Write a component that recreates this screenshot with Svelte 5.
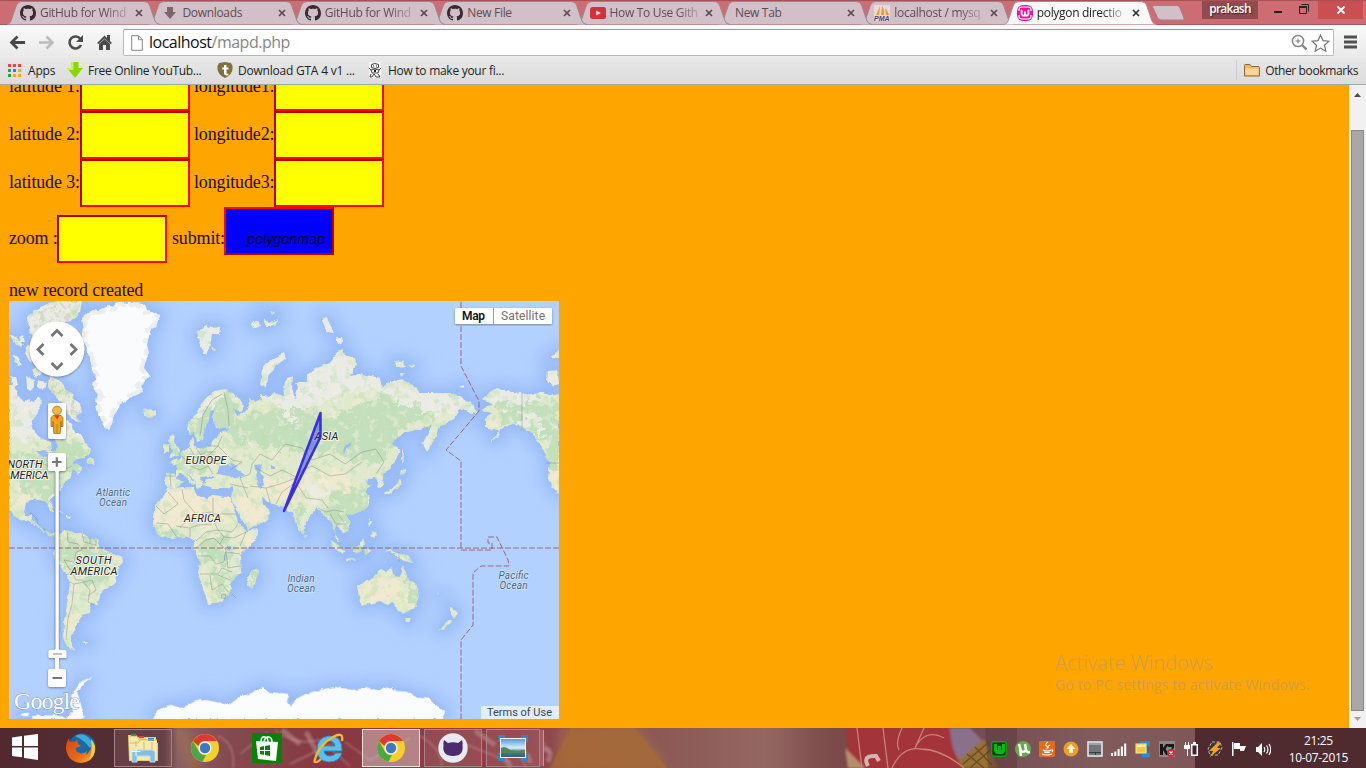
<script>
  const tabs = [
    { icon: 'github', title: 'GitHub for Wind', fade: true },
    { icon: 'download', title: 'Downloads' },
    { icon: 'github', title: 'GitHub for Wind', fade: true },
    { icon: 'github', title: 'New File' },
    { icon: 'youtube', title: 'How To Use Gith', fade: true },
    { icon: '', title: 'New Tab' },
    { icon: 'pma', title: 'localhost / mysq', fade: true },
    { icon: 'wamp', title: 'polygon directio', fade: true, active: true }
  ];

  const bookmarks = [
    { icon: 'apps', label: 'Apps', w: 60, ls: -0.2 },
    { icon: 'arrow', label: 'Free Online YouTub...', w: 150, ls: -0.3 },
    { icon: 'shield', label: 'Download GTA 4 v1 ...', w: 150, ls: -0.22 },
    { icon: 'robot', label: 'How to make your fi...', w: 150, ls: -0.28 }
  ];

  const appsDots = ['#f04438', '#f04438', '#f04438', '#2ba24c', '#3b78e7', '#f5a623', '#2ba24c', '#f5a623', '#f5a623'];

  const rows = [1, 2, 3];

  const greenland = 'M82 318L92 310L98 311L108 306L114 307L118 302L132 303L144 304L147 310L152 311L160 315L158 324L150 332L147 345L149 352L146 360L144 368L150 376L140 386L143 392L130 398L122 404L114 414L112 424L109 430L103 424L98 412L95 400L99 396L92 384L97 380L92 370L90 358L86 348L82 338L84 328Z';

  const land = [
    'M9 386L14 384L17 394L24 402L29 399L33 402L38 397L42 401L41 406L38 412L33 419L32 428L38 436L46 440L51 442L52 450L55 452L57 446L55 440L60 434L62 424L66 420L72 424L75 433L82 433L86 443L91 449L90 453L84 458L77 459L72 463L80 464L83 468L78 474L73 470L70 478L64 483L61 490L56 496L50 500L53 507L53 512L50 511L47 503L40 500L30 500L26 504L24 512L28 517L32 514L33 520L38 524L43 530L50 534L60 531L58 537L48 536L42 531L35 525L28 522L20 520L14 516L9 506Z',
    'M27 318L35 310L47 304L57 301L82 301L80 312L76 318L66 322L60 330L52 330L44 336L34 339L30 332Z',
    'M50 375L60 380L66 388L72 394L74 400L80 404L82 412L76 416L80 422L74 420L66 412L62 402L56 398L52 392L47 386Z',
    'M10 335L16 336L24 345L21 348L14 342Z', 'M19 337L23 335L25 341L21 341Z', 'M28 344L33 350L37 360L30 362L25 353Z', 'M12 354L17 356L22 365L17 366Z', 'M38 366L42 372L36 378L32 370Z', 'M10 376L16 378L18 384L14 386Z', 'M26 376L34 380L32 390L27 388Z', 'M38 380L46 382L44 390L37 387Z',
    'M54 403L60 405L62 413L57 412Z', 'M86 461L90 458L95 460L94 464L88 464Z',
    'M143 410L150 408L156 411L156 415L150 418L145 416Z',
    'M170 434L175 435L174 442L178 447L181 452L179 456L169 457L173 451L169 444Z', 'M164 445L169 444L169 452L164 454Z',
    'M197 332L203 329L206 325L212 328L220 327L219 334L212 334L210 345L206 355L202 350L199 342Z', 'M211 346L216 350L213 352Z',
    'M251 324L258 320L260 325L254 328Z', 'M263 318L270 322L278 319L275 326L266 327Z', 'M270 311L275 312L272 315Z',
    'M260 385L262 370L270 360L284 353L286 358L276 366L268 376L267 388Z',
    'M187 428L189 421L196 414L201 404L208 396L215 391L224 389L232 393L240 399L244 406L241 412L233 408L236 416L244 412L250 404L249 398L256 402L262 400L260 394L268 396L274 393L285 396L284 386L287 378L293 376L292 388L295 400L298 388L296 382L307 382L307 374L317 368L330 363L337 351L343 349L345 355L355 358L356 364L350 376L362 374L380 378L382 388L387 384L398 379L413 384L420 393L438 393L453 393L463 398L472 404L477 411L472 414L460 408L458 414L453 419L438 429L435 438L427 453L423 443L428 433L433 424L420 429L413 431L407 432L395 439L392 444L400 449L398 456L390 469L383 474L384 487L378 488L377 480L375 478L368 479L367 484L372 484L365 491L370 499L368 507L360 512L352 515L346 514L350 525L348 532L343 533L341 529L337 525L335 533L340 543L336 539L333 525L330 520L327 520L323 513L317 508L313 513L306 522L304 534L301 534L295 522L293 512L287 511L285 507L276 505L268 503L262 497L263 504L270 509L271 514L267 520L256 526L247 529L244 523L238 513L231 497L233 486L227 488L213 488L203 485L206 479L217 478L212 476L200 477L203 484L198 489L193 478L185 472L192 479L196 484L192 485L186 477L180 472L176 478L183 482L176 488L168 488L165 484L165 473L176 474L176 465L170 462L179 458L184 451L190 447L189 440L193 436L195 447L202 449L210 446L214 439L219 436L220 432L230 429L215 428L213 419L216 406L209 414L207 423L205 430L202 439L197 441L195 433L190 434Z',
    'M322 319L327 317L331 327L334 333L327 332L324 325Z', 'M336 337L342 337L343 342L338 344Z', 'M394 361L404 362L406 366L397 367Z', 'M408 365L414 366L412 368Z', 'M400 373L405 373L402 376Z', 'M458 387L464 385L464 388Z',
    'M167 489L182 487L194 487L197 494L207 499L214 495L224 497L230 496L233 504L238 522L246 531L258 529L258 535L252 545L240 555L241 572L231 583L232 590L222 602L208 604L203 588L198 573L200 562L193 548L195 541L188 537L170 538L160 537L153 527L153 518L155 505L163 497Z',
    'M257 568L258 574L255 584L250 588L247 583L250 573Z',
    'M60 533L67 530L72 533L82 533L90 538L97 540L100 548L112 553L123 557L124 562L117 570L115 583L103 590L97 605L91 604L90 613L82 615L77 625L74 632L71 638L71 645L76 651L67 647L63 638L64 622L67 605L70 582L65 573L55 558L53 553L58 547Z',
    'M357 585L370 580L380 570L386 572L392 567L393 574L398 577L401 575L403 566L407 575L410 580L417 586L419 596L415 608L405 613L398 611L392 602L388 605L380 601L362 606L359 598Z', 'M405 618L411 618L408 623Z',
    'M451 607L458 613L454 619L451 614Z', 'M449 619L452 621L444 630L440 629Z',
    'M385 550L390 550L396 553L408 555L413 563L404 561L398 559L394 554Z', 'M352 547L357 546L363 539L365 544L360 553L354 552Z', 'M329 540L336 543L344 551L343 555L337 550Z', 'M345 558L357 560L356 561L346 560Z', 'M365 549L370 549L367 556L366 553Z', 'M369 518L371 521L370 527L368 524Z', 'M373 531L377 534L374 538L371 535Z', 'M304 533L307 536L305 538Z',
    'M402 448L404 456L403 464L401 460Z', 'M401 470L406 469L405 473L400 475Z', 'M400 478L402 484L398 488L388 494L384 494L389 489L396 486Z', 'M54 507L60 511L65 514L58 511Z', 'M66 516L71 517L70 519L66 518Z', 'M437 592L439 594L438 594Z', 'M83 642L88 642L86 644Z',
    'M482 399L488 394L497 388L505 391L520 393L532 395L543 391L550 396L559 394L559 493L553 489L548 479L550 463L543 449L537 440L530 432L522 428L513 424L500 429L498 438L490 443L495 436L498 431L485 428L485 419L492 413L482 411L487 406L492 405Z',
    'M548 371L558 370L559 384L552 386L547 380Z', 'M551 357L559 350L559 358Z'
  ];

  const antarctica = [
    'M153 719L158 710L170 705L182 708L200 699L215 702L230 704L240 697L252 693L263 687L268 692L288 694L287 702L290 708L296 699L306 694L320 690L335 687L352 690L370 688L376 690L391 687L395 691L408 692L420 698L430 699L437 706L445 711L443 719Z',
    'M92 677L84 683L77 692L80 702L85 719L66 719L74 708L72 696L80 682Z', 'M20 714L30 713L29 717L22 717Z', 'M33 716L60 715L66 719L34 719Z'
  ];

  const forest = [
    'M9 453L40 455L60 440L90 448L85 462L60 485L46 500L30 498L9 480Z', 'M190 430L200 410L226 394L236 400L240 412L226 428L212 436L196 440Z',
    'M225 425L262 412L310 405L322 420L340 412L390 395L410 400L430 398L440 412L400 430L390 446L382 470L350 458L330 450L300 454L270 445L240 448Z',
    'M170 445L184 455L205 450L215 460L205 475L180 470Z', 'M345 490L366 488L368 506L350 530L336 532L320 512L328 500Z', 'M200 540L228 534L232 560L210 566L198 560Z',
    'M158 530L190 534L194 540L160 538Z', 'M60 535L82 536L96 542L116 558L108 580L92 585L70 572L56 558Z', 'M500 402L540 398L559 410L559 480L540 442L510 422L494 412Z',
    'M352 540L366 540L362 555L352 552Z', 'M390 552L412 556L410 563Z', 'M404 570L419 590L414 611L404 604L410 592Z', 'M295 508L303 512L303 533L298 524Z', 'M210 572L230 572L230 588L218 598Z', 'M28 520L60 532L55 536L38 529Z', 'M250 570L258 570L253 587Z'
  ];
  const desert = [
    'M165 490L230 495L238 516L232 526L156 526L156 505Z', 'M234 492L262 500L270 514L250 526L238 510Z', 'M250 484L285 478L340 472L352 488L320 496L290 502L260 496Z', 'M360 584L380 576L402 584L408 598L392 600L364 604Z',
    'M245 530L257 532L245 550L236 545Z', 'M68 584L74 590L72 620L76 628L68 638L65 620Z', 'M204 580L210 584L212 600L206 600Z', 'M16 480L26 486L26 508L16 505Z', 'M488 419L500 420L500 434L490 428Z', 'M110 552L122 558L118 566L112 562Z', 'M548 468L556 470L558 488L551 484Z'
  ];
  const tundra = [
    'M9 380L40 400L52 398L86 400L88 436L74 438L40 436L9 440Z', 'M262 392L300 380L340 350L360 372L420 388L478 402L470 416L440 414L400 402L390 394L360 388L330 400L290 412L270 402Z', 'M196 414L210 394L220 394L204 412Z',
    'M484 400L500 386L545 390L559 396L530 402L500 406Z', 'M424 430L436 430L428 452Z', 'M20 296L90 296L50 340L20 340Z', 'M515 412L545 420L546 440L530 426Z', 'M286 414L296 418L300 428L288 424Z', 'M300 490L326 486L336 492L318 498Z', 'M9 330L50 330L50 392L9 392Z', 'M190 318H290V360H190Z', 'M258 350H290V392H258Z', 'M320 315H345V345H320Z', 'M545 345H559V390H545Z'
  ];

  const borders = [
    'M9 462L40 462L48 466L58 474L64 470L72 466', 'M522 392V430M546 463H559', 'M200 436L203 415L212 400L222 394M224 392L228 410L229 426', 'M182 456L187 462L198 463L208 456L218 446L232 460L242 462L230 470M190 448L196 458L205 452L216 452M190 466L200 470L208 466L213 474M166 476L176 476M170 474L171 487M196 448L206 462L220 464M208 446L218 446L222 436',
    'M240 478L250 474L252 464L260 454L272 460L285 444L302 448L312 460L330 454L345 464L362 452L376 449L384 462L376 474M250 486L266 488L280 484L296 478L302 470L312 466L330 476L345 474L362 462M266 488L270 502M276 504L282 492L296 482L306 498L322 500L328 508M256 468L270 476L282 470L298 478M240 478L248 498M230 484L248 488',
    'M182 489L184 500L196 514L212 512M213 498V520M213 514H236M168 492L178 504L164 514L156 506M180 528L190 516M156 523L168 524L176 536M176 526L190 528L198 525L212 524M190 528L190 537M196 541L206 532L218 530L232 532L238 524M213 520L218 530L224 537L234 538L246 532L240 546M198 556L210 556L216 564L224 562L226 550L220 544L224 537M200 574H218L222 568L232 572M210 575L212 590L222 584L228 592M218 575L230 580M226 552L240 554M226 552L228 568L240 566M196 548L206 540L214 538L220 544M232 594L236 598',
    'M67 530L68 542L78 544L82 550L76 552L74 562L64 560M82 533L84 542L96 545M90 538V543M96 540V546M66 575L72 572L76 580L82 580L90 590L88 602L94 605M70 582L74 584L72 604L68 618L66 640M74 584L84 582L92 580L96 590L88 596M64 560L70 570L80 570',
    'M30 512L38 520M38 524L36 518M46 534L44 528M318 508L326 512L334 510L344 512M330 514L336 524L346 524M338 514L344 522M350 515M364 548L352 548M399 552V562', 'M222 594L226 595L225 599L221 598Z'
  ];

  const tray = ['wamp', 'utorrent', 'java', 'update', 'touchpad', 'signal', 'archive', 'k7', 'power', 'winamp', 'flag', 'volume'];
  const taskbar = [
    { icon: 'firefox' },
    { icon: 'explorer', state: 'open' },
    { icon: 'chrome' },
    { icon: 'store' },
    { icon: 'ie' },
    { icon: 'chrome', state: 'focus' },
    { icon: 'octocat', state: 'open' },
    { icon: 'photo', state: 'open stack' }
  ];
</script>

{#snippet githubMark()}
  <svg width="16" height="16" viewBox="0 0 16 16"><path fill="#382b30" d="M8 0C3.58 0 0 3.58 0 8c0 3.54 2.29 6.53 5.47 7.59.4.07.55-.17.55-.38 0-.19-.01-.82-.01-1.49-2.01.37-2.53-.49-2.69-.94-.09-.23-.48-.94-.82-1.13-.28-.15-.68-.52-.01-.53.63-.01 1.08.58 1.23.82.72 1.21 1.87.87 2.33.66.07-.52.28-.87.51-1.07-1.78-.2-3.64-.89-3.64-3.95 0-.87.31-1.59.82-2.15-.08-.2-.36-1.02.08-2.12 0 0 .67-.21 2.2.82.64-.18 1.32-.27 2-.27s1.36.09 2 .27c1.53-1.04 2.2-.82 2.2-.82.44 1.1.16 1.92.08 2.12.51.56.82 1.27.82 2.15 0 3.07-1.87 3.75-3.65 3.95.29.25.54.73.54 1.48 0 1.07-.01 1.93-.01 2.2 0 .21.15.46.55.38A8.01 8.01 0 0 0 16 8c0-4.42-3.58-8-8-8z" /></svg>
{/snippet}

{#snippet favicon(name)}
  {#if name === 'github'}
    {@render githubMark()}
  {:else if name === 'download'}
    <svg width="16" height="16" viewBox="0 0 16 16"><path fill="#7c666b" d="M5 2h6v5h3L8 14 2 7h3z" /></svg>
  {:else if name === 'youtube'}
    <svg width="16" height="16" viewBox="0 0 16 16"><rect y="2" width="16" height="12" rx="2.500" fill="#d2333a" /><path fill="#ecd7dc" d="M6.200 5.500v5L11 8z" /></svg>
  {:else if name === 'pma'}
    <svg width="16" height="16" viewBox="0 0 16 16"><rect width="16" height="16" fill="#e7d9dc" /><path fill="#f09a2c" d="M6 1L5 10H2Q4 6 6 1zM8 1q3 4 2 9H7zM11 3q3 3 4 7h-3z" /><text x="0" y="16" font-size="6.600" font-weight="700" font-style="italic" fill="#55436c" font-family="Liberation Sans, sans-serif" textLength="15.500" lengthAdjust="spacingAndGlyphs">PMA</text></svg>
  {:else if name === 'wamp'}
    <svg width="16" height="16" viewBox="0 0 16 16"><rect width="16" height="16" rx="6" fill="#fb0d9c" /><path fill="none" stroke="#fff" stroke-width="1.200" d="M2 6V5q0-3 3-3h6q3 0 3 3v1M2 10v1q0 3 3 3h6q3 0 3-3v-1" /><path fill="none" stroke="#fff" stroke-width="1.900" stroke-linecap="round" d="M4.600 5.500v3.200q.3 2 1.900 2T8 8.800V6.400v2.400q0 1.900 1.500 1.900t1.900-2V5.500" /></svg>
  {/if}
{/snippet}

{#snippet chromeLogo()}
  <svg width="30" height="30" viewBox="0 0 30 30">
    <circle cx="15" cy="15" r="14" fill="#f7cf2a" />
    <path fill="#dc3b30" d="M2.900 8A14 14 0 0 1 27.100 8H15a7 7 0 0 0-6.600 5z" />
    <path fill="#4aa844" d="M2.900 8 9 18.500A7 7 0 0 0 16 22l-3.500 6.800A14 14 0 0 1 2.900 8z" />
    <circle cx="15" cy="15" r="6.600" fill="#f2f2f2" /><circle cx="15" cy="15" r="5.200" fill="#3d79bd" />
  </svg>
{/snippet}

{#snippet appIcon(name)}
  {#if name === 'chrome'}
    {@render chromeLogo()}
  {:else if name === 'firefox'}
    <svg width="30" height="30" viewBox="0 0 30 30">
      <defs><linearGradient id="fox" x1="0" y1="0" x2="1" y2="1"><stop offset="0" stop-color="#d84515" /><stop offset=".6" stop-color="#e76b19" /><stop offset="1" stop-color="#f6c63a" /></linearGradient></defs>
      <circle cx="16" cy="14" r="13.500" fill="#1769a8" /><path d="M9 3q7-4 13 1 6 6 2 11-5-7-15-12z" fill="#3caade" />
      <path fill="url(#fox)" d="M3 5q0 3 1 4 3-1 5 0l2-3 1 5 3 2-5 2q-1 4 4 5 4 1 7-2l-1 4q7-5 5-15 5 6 4 11-2 11-14 12Q2 29 0 16 0 9 3 5z" />
      <path fill="#f9cf35" d="M25 6q5 6 4 11-1 7-6 10 4-8 2-21z" />
    </svg>
  {:else if name === 'explorer'}
    <svg width="32" height="30" viewBox="0 0 32 30">
      <path fill="#e4cb7e" d="M1 2h8l2 2h18v6h2v18H2z" /><path fill="#f7e8ac" d="M2 4h8l1 3h8v-2h9l2 3v19H3z" />
      <path fill="#24a343" d="M4 1h5v2H4z" /><path fill="#d34a38" d="M12 3h5v2h-5z" /><path fill="#358bc8" d="M21 5h6v3h-6z" />
      <path fill="none" stroke="#d9bd69" d="M3 10h8l2-3h17M9 8v12M17 9v10M25 9v10" />
      <path fill="#82bfe0" stroke="#b9e0f3" d="M5 29V20q0-3 3-3h17q3 0 3 3v9h-5v-6H10v6z" /><path stroke="#fff" stroke-width="1" d="M9 14v9M4.500 18.500h9" />
    </svg>
  {:else if name === 'store'}
    <svg width="30" height="30" viewBox="0 0 30 30">
      <rect width="30" height="30" fill="#078207" /><path fill="none" stroke="#fff" stroke-width="1.600" d="M9 9Q9 3 13 4q3 0 3 5M12 9q1-5 4-5 4 0 4 5" /><path fill="#fff" d="M4 8l22 1-2 19L6 26z" />
      <path fill="#078207" d="M8 14l4-1v4H8zm5-1l5-1v5h-5zM8 18h4v4l-4-1zm5 0h5v5l-5-1z" />
    </svg>
  {:else if name === 'ie'}
    <svg width="32" height="30" viewBox="0 0 32 30">
      <path fill="#59bfec" stroke="#258cc7" d="M29 18H11q1 5 6 5 4 0 6-3h6q-3 9-13 9Q4 28 4 17 4 4 16 3q13-1 13 15zM11 13h11q-1-5-5.500-5T11 13z" />
      <path fill="none" stroke="#f5b82e" stroke-width="2.300" d="M8 26q-8 7-6 0Q6 12 20 4q11-6 9 4" />
    </svg>
  {:else if name === 'octocat'}
    <svg width="30" height="30" viewBox="0 0 30 30"><circle cx="15" cy="15" r="14.700" fill="#e9e9f1" /><path fill="#4b2c70" d="M6 7l4 3q5-1.500 10 0l4-3q1 3 .5 5 1.500 11-9.500 11T5.500 12Q5 10 6 7z" /></svg>
  {:else if name === 'photo'}
    <svg width="30" height="26" viewBox="0 0 30 26">
      <defs><linearGradient id="sky" x1="0" y1="0" x2="0" y2="1"><stop offset="0" stop-color="#4f9ddd" /><stop offset=".5" stop-color="#daf0f7" /><stop offset=".7" stop-color="#3f7c86" /><stop offset="1" stop-color="#356084" /></linearGradient></defs>
      <path fill="none" stroke="#3c83bd" stroke-width="4" d="M7 2H2v5M23 2h5v5M2 18v6h5M28 18v6h-5" /><rect x="2" y="3" width="26" height="20" fill="#edf5f7" /><rect x="3" y="4" width="24" height="18" fill="url(#sky)" /><path fill="#53865b" d="M3 13q4-3 9 2l7 1 8-1v3H3z" />
    </svg>
  {/if}
{/snippet}

{#snippet trayIcon(name)}
  <svg width="16" height="16" viewBox="0 0 16 16">
    {#if name === 'wamp'}
      <rect x=".7" y=".7" width="14.600" height="14.600" rx="2" fill="#063e09" stroke="#09a20d" stroke-width="1.400" /><path fill="#0bb812" d="M3 3h3v6h1V5h3v4h1V3h3v7l-2 3H5l-2-3z" />
    {:else if name === 'utorrent'}
      <circle cx="8" cy="8" r="8" fill="#62ac48" /><path fill="none" stroke="#fff" stroke-width="2.500" d="M4 3l2 7q3 2 5-1L10 3m1 6q1 3 4 2M5 8l1 7" />
    {:else if name === 'java'}
      <rect width="16" height="16" rx="1" fill="#e46b1c" /><path fill="none" stroke="#fff" stroke-width="1.100" d="M9 1Q5 4 8 5.500T7 8M11 4Q7 6 9 7M4 9q4 2 8 0M5 11q3 1 6 0M3 13q5 2 10 0M12 9q3-1 1 2" />
    {:else if name === 'update'}
      <circle cx="8" cy="8" r="7.500" fill="#f59a23" /><path fill="#fff6d0" d="M8 3l4.500 5H10v4H6V8H3.500z" />
    {:else if name === 'touchpad'}
      <rect x="1" y="1" width="14" height="14" fill="#73777a" stroke="#e4eff6" stroke-width="1.500" /><path fill="#303b44" d="M2 11h12v1H2zM8 12h1v2H8z" /><path fill="#9da2a3" d="M2 2h12v2H2z" />
    {:else if name === 'signal'}
      <path fill="#fff" d="M0 12h2v3H0zM3.300 10.500h2V15h-2zM6.600 8h2v7h-2zM9.900 5.500h2V15h-2zM13.200 2.500h2V15h-2z" />
    {:else if name === 'archive'}
      <path fill="#2f8acc" d="M5 0h10v5h-3v7h3v4H7v-3h4V4H5z" /><rect x="1" y="3" width="10" height="9" fill="#f3c83d" stroke="#fce9a0" /><path fill="#fff1a5" d="M2 4h8v2H2z" />
    {:else if name === 'k7'}
      <rect width="16" height="16" fill="#898989" /><path fill="#171717" d="M1 3h3v4l3-4h3L6.500 8l4 6H7L4 9v5H1zM9 3h6v3l-3 8h-2l3-8H9z" /><circle cx="12" cy="12" r="4" fill="#d32834" /><path stroke="#fff" stroke-width="1.200" d="M10.500 10.500l3 3m0-3l-3 3" />
    {:else if name === 'power'}
      <path fill="#fff" d="M2 1h1v3h2V1h1v3h1v4H5v7H4V8H1V4h1zM8 3h2V1h3v2h2v12H8z" /><path fill="#3a272b" d="M9.500 4.500h4v9h-4z" />
    {:else if name === 'winamp'}
      <path fill="#363636" stroke="#ddd" stroke-width=".8" stroke-dasharray="3 1.500" d="M5 1h8l2 6-4 7H3L1 8z" /><path fill="#f5a025" d="M11 1L2 10h4l-3 6 11-9h-4l4-5z" />
    {:else if name === 'flag'}
      <path fill="#fff" d="M1 1h1.500v14H1zM3 2h6v3h6l-2 5H9V8H3z" />
    {:else if name === 'volume'}
      <path fill="#fff" d="M1 6h2l4-4v13l-4-4H1z" /><path fill="none" stroke="#fff" stroke-width="1.200" d="M9 6q1.500 2.500 0 5M11.500 4.500q3 4 0 8M14 3q3.500 5.500 0 11" />
    {/if}
  </svg>
{/snippet}

<div class="desktop">
  <header class="tabstrip">
    {#each tabs as tab, i}
      <div class="tab" class:active={tab.active} style="z-index: {tab.active ? 20 : 10 - i}">
        <svg class="shape" width="158" height="25" viewBox="0 0 158 25">
          <path d="M0 24.500Q3 24 4 21L9.500 5Q11 1.500 15 1.500H137Q141 1.500 142.500 5L148 21Q149 24 153 24.500" />
        </svg>
        {#if tab.icon}<span class="fav">{@render favicon(tab.icon)}</span>{/if}
        <span class="title" class:fade={tab.fade}>{tab.title}</span>
        <svg class="close" width="8" height="8" viewBox="0 0 8 8"><path d="M1 1l6 6M7 1L1 7" /></svg>
      </div>
    {/each}
    <svg class="newtab" width="33" height="16" viewBox="0 0 33 16"><path d="M2 .5h23q2 0 3 2.500l4 10q.5 2-1.500 2H9q-2.500 0-3.500-2.500L.8 2.500Q0 .5 2 .5z" fill="#d2c0c9" stroke="#a97e87" /></svg>
    <div class="winctl">
      <span class="user">prakash</span>
      <svg width="60" height="19" viewBox="0 0 60 19"><path d="M16 11h8" stroke="#222" stroke-width="2" /><path d="M41.500 5.500h7v7h-7zM43.500 3.500h7v7" fill="none" stroke="#2c2022" /><path d="M41 5h8v2h-8z" fill="#2c2022" /></svg>
      <span class="x"><svg width="10" height="10" viewBox="0 0 10 10"><path d="M1.500 1.500l7 7m0-7l-7 7" stroke="#fff" stroke-width="1.800" /></svg></span>
    </div>
  </header>

  <div class="toolbar">
    <svg class="nav" width="124" height="33" viewBox="0 0 124 33">
      <path d="M25 17.500H12M17.500 11.500l-6 6 6 6" fill="none" stroke="#484848" stroke-width="2.800" />
      <path d="M39 17.500h13M46.500 11.500l6 6-6 6" fill="none" stroke="#bcbcbc" stroke-width="2.600" />
      <path d="M80.500 14A6 6 0 1 0 81 20" fill="none" stroke="#4d4d4d" stroke-width="2.600" /><path d="M83 10v7h-7z" fill="#4d4d4d" />
      <path d="M97 18l7.500-7.500L107 13v-3h3v6l2 2-1.500 1-6-5.500-6 5.500zM99 19l5.500-5 5.500 5v6h-4v-5h-3v5h-4z" fill="#4b4b4b" />
    </svg>
    <div class="omnibox">
      <svg width="12" height="16" viewBox="0 0 12 16"><path d="M.7.700h6.800l3.800 4v10.600H.7zM7.500.7v4h3.800" fill="#fff" stroke="#868686" /></svg>
      <span class="url">localhost<i>/mapd.php</i></span>
      <svg width="16" height="17" viewBox="0 0 16 17"><circle cx="7" cy="7" r="5.600" fill="#fff" stroke="#858585" stroke-width="1.500" /><path d="M4.500 7h5M7 4.500v5" stroke="#777" /><path d="M11 11l4.500 4.500" stroke="#858585" stroke-width="2.400" /></svg>
      <svg class="star" width="19" height="18" viewBox="0 0 19 18"><path d="M9.500 1l2.500 5.600 6 .6-4.500 4.100 1.300 5.900-5.300-3.100-5.300 3.100 1.300-5.900L1 7.200l6-.6z" fill="#fff" stroke="#747474" stroke-width="1.200" /></svg>
    </div>
    <svg class="menu" width="13" height="14" viewBox="0 0 13 14"><path d="M0 2h13M0 7h13M0 12h13" stroke="#505050" stroke-width="2.800" /></svg>
  </div>

  <div class="bookmarks">
    {#each bookmarks as b}
      <div class="bm" style="width: {b.w}px; letter-spacing: {b.ls}px">
        {#if b.icon === 'apps'}
          <span class="apps">{#each appsDots as c}<b style="background: {c}"></b>{/each}</span>
        {:else if b.icon === 'arrow'}
          <svg width="16" height="16" viewBox="0 0 16 16"><path d="M4.500 0h7v6H16l-8 10L0 6h4.500z" fill="#8cd50b" /><path d="M4.500 0h2v8H2L0 6h4.500z" fill="#c2f65d" /></svg>
        {:else if b.icon === 'shield'}
          <svg width="16" height="16" viewBox="0 0 16 16"><path d="M2 1l6-1 6 1 1.500 3q1 8-7.500 12Q-.5 12 .5 4z" fill="#81703b" /><path d="M7 3h2.500v2.500h2v2h-2v4q1 .5 2 0v1.800Q7 14 7 11V7.500H5.300v-2H7z" fill="#fff" /></svg>
        {:else}
          <svg width="16" height="16" viewBox="0 0 16 16"><rect x="2" width="12" height="16" fill="#f4f4f4" /><path d="M4.500 2.500q3.500-2 7 0v3q-3.500 2-7 0zM4 8q4-2 8 0l-1 3H5zM2 6l2 2M14 6l-2 2M4 12l-1 3h2l2-3 2 3h4l-2-3" fill="none" stroke="#333" stroke-width=".9" /><path d="M6 3.500h1v1H6zM9 3.500h1v1H9zM7 8h2v2H7z" fill="#222" /></svg>
        {/if}
        <span>{b.label}</span>
      </div>
    {/each}
    <div class="other">
      <svg width="16" height="13" viewBox="0 0 16 13"><path d="M.5 12V1.500q0-1 1-1H6l1.500 2H14q1.500 0 1.500 1V12z" fill="#e9bc68" stroke="#8b693c" /><path d="M1.500 4.500h13V11h-13z" fill="#fbd795" /></svg>
      <span>Other bookmarks</span>
    </div>
  </div>

  <div class="viewport">
    <main class="page">
      <form class="coords">
        {#each rows as n}
          <div class="row">
            <label class="lat" for="lat{n}">latitude {n}:</label><input id="lat{n}" type="text" />
            <label class="lng" for="lng{n}">longitude{n}:</label><input id="lng{n}" type="text" />
          </div>
        {/each}
        <div class="row last">
          <label class="zoomlab" for="zoom">zoom :</label><input id="zoom" type="text" />
          <label class="sublab" for="go">submit:</label><button id="go" type="button">polygonmap</button>
        </div>
      </form>
      <p class="status">new record created</p>

      <div class="map">
        <svg width="550" height="418" viewBox="9 301 550 418">
          <defs>
            <filter id="rough" x="0" y="290" width="580" height="440" filterUnits="userSpaceOnUse"><feTurbulence type="fractalNoise" baseFrequency=".16" numOctaves="3" seed="4" /><feDisplacementMap in="SourceGraphic" scale="4" xChannelSelector="R" yChannelSelector="G" /><feGaussianBlur stdDeviation=".3" /></filter>
            <filter id="patch" x="0" y="290" width="580" height="440" filterUnits="userSpaceOnUse"><feTurbulence type="fractalNoise" baseFrequency=".1" numOctaves="4" seed="9" result="n" /><feDisplacementMap in="SourceGraphic" in2="n" scale="26" xChannelSelector="R" yChannelSelector="G" /><feGaussianBlur stdDeviation=".6" /></filter>
            <filter id="mottle" x="0" y="290" width="580" height="440" filterUnits="userSpaceOnUse" color-interpolation-filters="sRGB"><feTurbulence type="fractalNoise" baseFrequency=".1" numOctaves="3" seed="21" /><feColorMatrix values="0 0 0 0 .74  0 0 0 0 .87  0 0 0 0 .71  9 0 0 0 -4.900" /></filter>
            <filter id="pale" x="0" y="290" width="580" height="440" filterUnits="userSpaceOnUse" color-interpolation-filters="sRGB"><feTurbulence type="fractalNoise" baseFrequency=".13" numOctaves="3" seed="33" /><feColorMatrix values="0 0 0 0 .94  0 0 0 0 .93  0 0 0 0 .86  9 0 0 0 -5.200" /></filter>
            <filter id="relief" x="0" y="290" width="580" height="440" filterUnits="userSpaceOnUse" color-interpolation-filters="sRGB"><feTurbulence type="fractalNoise" baseFrequency=".2" numOctaves="3" seed="13" /><feColorMatrix values="0 0 0 0 .72  0 0 0 0 .72  0 0 0 0 .7  6 0 0 0 -3" /></filter>
            <filter id="shelf" x="-40" y="260" width="660" height="500" filterUnits="userSpaceOnUse"><feGaussianBlur stdDeviation="9" /></filter>
            <filter id="shelf2" x="-40" y="260" width="660" height="500" filterUnits="userSpaceOnUse"><feGaussianBlur stdDeviation="3" /></filter>
            <filter id="soft"><feDropShadow dx="0" dy="1" stdDeviation="1.300" flood-color="#333" flood-opacity=".5" /></filter>
            <clipPath id="landclip">{#each land as d}<path {d} />{/each}</clipPath>
            <clipPath id="arctic"><path d={land[1]} /><path d={land[2]} /></clipPath>
            <clipPath id="iceclip"><path d={greenland} /></clipPath>
          </defs>

          <rect x="9" y="301" width="550" height="418" fill="#b3d1ff" />
          <g fill="#8fb3f7" stroke="#8fb3f7" stroke-width="14" filter="url(#shelf)" opacity=".66">{#each land as d}<path {d} />{/each}<path d={greenland} />{#each antarctica as d}<path {d} />{/each}</g>
          <g fill="none" stroke="#8db2fa" stroke-width="4" filter="url(#shelf2)" opacity=".45">{#each land as d}<path {d} />{/each}<path d={greenland} />{#each antarctica as d}<path {d} />{/each}</g>

          <g filter="url(#rough)">
            <g clip-path="url(#landclip)">
              <rect x="9" y="301" width="550" height="418" fill="#e0e9cb" />
              <g filter="url(#patch)">
                <g fill="#c3dfbb">{#each forest as d}<path {d} />{/each}</g>
                <g fill="#f1e9cf">{#each desert as d}<path {d} />{/each}</g>
                <g fill="#ebebe6">{#each tundra as d}<path {d} />{/each}</g>
              </g>
              <rect x="9" y="400" width="550" height="80" filter="url(#mottle)" opacity=".45" />
              <rect x="9" y="301" width="550" height="330" filter="url(#pale)" opacity=".5" />
            </g>
            <path d={greenland} fill="#fafbfc" />
            <g clip-path="url(#iceclip)"><path d={greenland} fill="none" stroke="#e3e4e2" stroke-width="9" stroke-dasharray="9 3 14 7 5 4" opacity=".6" /></g>
            <g clip-path="url(#arctic)"><rect x="9" y="301" width="90" height="125" filter="url(#relief)" opacity=".4" /></g>
            <g fill="#fbfcfd" stroke="#e3e6e8" stroke-width=".7">{#each antarctica as d}<path {d} />{/each}</g>
            <g fill="#9abcf8">
              <path d="M217 474L220 466L228 465L236 469L245 475L240 478L228 476Z" /><path d="M229 463L238 465L234 470Z" />
              <path d="M254 466L262 465L260 472L264 478L262 488L257 486L258 478Z" /><path d="M344 453L351 445L350 442L343 450Z" /><path d="M36 451L46 450L49 456L43 457ZM49 460L55 458L56 463L51 463Z" /><path d="M227 546L231 546L230 551L227 550Z" /><path d="M224 553L226 561L224 560Z" /><path d="M271 465L276 466L275 469L271 469Z" />
            </g>
          </g>
          <g class="borders">{#each borders as d}<path {d} />{/each}</g>
          <g class="dateline">
            <path d="M9 548H559" />
            <path d="M461 302V366L479 401V411L446 450L461 461V550H492V543H488V537H497L508 560L509 566H481L473 573V625L461 640V719" />
          </g>

          <g class="cont">
            <text x="25" y="468" textLength="35">NORTH</text><text x="26" y="478.500" textLength="45">AMERICA</text>
            <text x="206" y="464" textLength="41">EUROPE</text><text x="202.500" y="521.500" textLength="37">AFRICA</text>
            <text x="93.500" y="564" textLength="36">SOUTH</text><text x="94" y="574.500" textLength="47">AMERICA</text><text x="326.500" y="440" textLength="24">ASIA</text>
          </g>
          <g class="ocean">
            <text x="113" y="496" textLength="34">Atlantic</text><text x="113" y="506" textLength="28">Ocean</text>
            <text x="301" y="582" textLength="27">Indian</text><text x="301" y="591.500" textLength="28">Ocean</text>
            <text x="513.500" y="579" textLength="30">Pacific</text><text x="513.500" y="588.500" textLength="28">Ocean</text>
          </g>
          <path d="M320.500 413V437L284 511Z" fill="#2525ee" fill-opacity=".42" stroke="#2a1fe8" stroke-width="2.500" stroke-linejoin="round" stroke-opacity=".9" />

          <g filter="url(#soft)">
            <circle cx="57" cy="349" r="27.500" fill="#fff" />
            <rect x="48" y="403" width="18" height="36" rx="2" fill="#fff" />
            <path d="M55 471h4v199h-4z" fill="#fff" />
            <rect x="48" y="453" width="18" height="18" rx="2" fill="#fff" /><rect x="48.500" y="650" width="18" height="8" rx="1.500" fill="#fff" /><rect x="48" y="669" width="18" height="18" rx="2" fill="#fff" />
          </g>
          <path d="M55.500 472v177M59 472v177" stroke="#8796b5" stroke-width=".5" />
          <path d="M51.500 336l5.500-5.500 5.500 5.500M51.500 363l5.500 5.500 5.500-5.500M43.500 344l-5.500 5.500 5.500 5.500M70.500 344l5.500 5.500-5.500 5.500" fill="none" stroke="#747474" stroke-width="2.800" />
          <path d="M52 462h9.500M56.800 457.300v9.500M52.500 678h9.500" stroke="#777" stroke-width="2.200" /><path d="M53 654h9" stroke="#888" />
          <g fill="#efa41f" stroke="#9b6510" stroke-width=".7"><circle cx="57" cy="410.500" r="4.400" fill="#f5b640" /><path d="M53 415.500h8l2 2v9h-2v-5l-.8 12h-6.400l-.8-12v5h-2v-9z" /></g><path d="M54.500 415.500h5l-2.500 4z" fill="#d33b22" /><path d="M57 424v9" stroke="#b57812" stroke-width=".8" />

          <g filter="url(#soft)"><rect x="455" y="308" width="97" height="16" rx="1" fill="#fff" /></g><path d="M493.500 308v16" stroke="#939eae" />
          <text class="btn" x="462" y="320" font-weight="600" fill="#111" textLength="23">Map</text><text class="btn" x="501" y="320" fill="#707070" textLength="44">Satellite</text>
          <rect x="481" y="706" width="78" height="13" fill="#edf3fc" opacity=".82" /><text class="btn terms" x="487" y="716" fill="#444" textLength="65">Terms of Use</text>
          <text class="google" x="14" y="709" textLength="66">Google</text>
        </svg>
      </div>
      <aside class="activate"><strong>Activate Windows</strong><span>Go to PC settings to activate Windows.</span></aside>
    </main>
    <div class="scroll">
      <svg width="9" height="5" viewBox="0 0 9 5"><path d="M1 5l3.500-4L8 5z" fill="#4b4b4b" /></svg>
      <div class="thumb"></div>
      <svg width="9" height="5" viewBox="0 0 9 5"><path d="M1 0l3.500 4L8 0z" fill="#a0a0a0" /></svg>
    </div>
  </div>

  <footer class="taskbar">
    <svg class="wall" width="1366" height="40" viewBox="0 0 1366 40">
      <defs>
        <linearGradient id="wall"><stop offset="0" stop-color="#51292f" /><stop offset=".12" stop-color="#553038" /><stop offset=".13" stop-color="#896066" /><stop offset=".17" stop-color="#84494f" /><stop offset=".24" stop-color="#873840" /><stop offset=".38" stop-color="#933f48" /><stop offset=".42" stop-color="#8c5051" /><stop offset=".5" stop-color="#8d5b58" /><stop offset=".56" stop-color="#956762" /><stop offset=".61" stop-color="#7b4a49" /><stop offset=".71" stop-color="#734b52" /><stop offset=".8" stop-color="#805b5c" /><stop offset=".875" stop-color="#805759" /></linearGradient>
        <filter id="haze"><feGaussianBlur stdDeviation="1" /></filter><filter id="haze2" x="-20%" y="-50%" width="140%" height="200%"><feGaussianBlur stdDeviation="5" /></filter>
      </defs>
      <rect width="1366" height="40" fill="url(#wall)" />
      <path d="M174 0l12 40h16L187 0zM560 0h80l28 40H556z" fill="#a8794c" opacity=".5" filter="url(#haze2)" /><path d="M572 -4h60l38 48H548z" fill="#a86b36" opacity=".75" filter="url(#haze)" />
      <g fill="none" stroke="#c28b91" stroke-width="1.500" opacity=".6" filter="url(#haze)"><path d="M218 8q18 8 15 32M240 26l28-22M275 2q18 16 45 10l30 26M290 36l50-24M345 14l25 18 40-22M420 8q22 12 22 32M450 10l60 24M508 18q15 10 18 22M540 10l10 15" /></g>
      <g stroke="#c8a1a5" stroke-width="5" opacity=".45" fill="none" filter="url(#haze)"><path d="M282 2l18 14M306 4l12 22M475 3l20 14M502 27l9 12M520 28q8-6 10 7M540 22q14-4 8 12" /></g>
      <g filter="url(#haze)" opacity=".9">
        <path d="M847 0h105q4 24 30 40H858q-14-12-11-40z" fill="#a83139" /><path d="M845 20l20 20h-17z" fill="#bd9472" /><path d="M950 0h20l12 12-20 24q-11-12-12-36z" fill="#8e7592" /><path d="M958 33l26-22 14 29h-34z" fill="#9c752d" />
      </g>
      <g fill="none" stroke="#c88376" stroke-width="1.300"><path d="M857 0l5 40M883 0l5 40M902 0q-7 15-3 22M924 0l-9 20q10-20 29-10M892 40q10-22 29-19 20 0 43 19" /><path d="M967 26l17 14M975 19l17 18M963 36l26-22M970 40l25-22" stroke="#654d25" /></g><path d="M868 38q-6-11 8-10l3 5" fill="none" stroke="#d5b6af" stroke-width="4" />
      <path d="M985 0h32v40h-29z" fill="#5e383d" opacity=".5" /><path d="M1195 0h171v40h-171z" fill="#4f2a2f" />
    </svg>
    <div class="start"><svg width="26" height="26" viewBox="0 0 26 26"><path fill="#fff" d="M0 3.500l10-1.400V12H0zM12 1.800L26 0v12H12zM0 13.500h10v9.800L0 22zM12 13.500h14V26l-14-2z" /></svg></div>
    {#each taskbar as app}
      <div class="slot"><div class="app {app.state ?? ''}">{@render appIcon(app.icon)}</div></div>
    {/each}
    <div class="tray">{#each tray as t}{@render trayIcon(t)}{/each}</div>
    <div class="clock"><span>21:25</span><span>10-07-2015</span></div>
  </footer>
</div>

<style>
  :global(body) { margin: 0; overflow: hidden; }
  .desktop { width: 1366px; height: 768px; display: flex; flex-direction: column; overflow: hidden; font: 12px "Open Sans", "Noto Sans", sans-serif; color: #222; }
  svg { flex: none; }

  .tabstrip { height: 25px; flex: none; box-sizing: border-box; display: flex; background: #cd6c72; border-top: 1px solid #aa5057; box-shadow: inset 0 -1px #a15c62; padding-left: 7px; }
  .tab { position: relative; width: 142.400px; flex: none; box-sizing: border-box; height: 24px; display: flex; align-items: center; padding: 0 6px 0 13px; }
  .shape { position: absolute; left: 0; top: -1px; z-index: -1; overflow: visible; }
  .shape path { fill: #d2c0c9; stroke: #9e858e; }
  .active .shape path { fill: #f9f9f9; stroke: #a98b91; }
  .fav { width: 16px; height: 16px; margin-right: 4px; }
  .fav :global(svg) { display: block; }
  .title { white-space: nowrap; color: #5e4c52; line-height: 20px; letter-spacing: -.32px; }
  .title.fade { -webkit-mask-image: linear-gradient(90deg, #000 76%, #0004); }
  .tab:not(:has(.fav)) .title { margin-left: 3px; }
  .active .title { color: #242424; }
  .close { margin-left: auto; }
  .close path { stroke: #5e4a50; stroke-width: 1.700; }
  .active .close path { stroke: #333; }
  .newtab { margin: 4px 0 0 6px; }
  .winctl { margin-left: auto; display: flex; height: 18px; }
  .user { width: 56px; line-height: 16px; background: #8f4b50; color: #fff; text-align: center; text-shadow: 1px 1px 1px #4a2226; letter-spacing: -.75px; font-weight: 600; }
  .x { width: 45px; margin-right: 3px; background: #c94f50; display: grid; place-items: center; }

  .toolbar { height: 33px; flex: none; display: flex; align-items: center; background: linear-gradient(#fafafa, #e9e9e9); }
  .nav { margin-right: -1px; }
  .omnibox { width: 1211px; height: 27px; margin-top: 2px; box-sizing: border-box; border: 1px solid #b8b8b8; border-top-color: #999; border-radius: 2px; background: #fff; display: flex; align-items: center; padding: 0 3px 0 7px; }
  .url { flex: 1; margin-left: 6px; font-size: 16px; line-height: 22px; letter-spacing: -.5px; color: #111; padding-bottom: 1px; }
  .url i { font-style: normal; color: #858585; }
  .star { margin-left: 4px; }
  .menu { margin-left: 10px; }

  .bookmarks { height: 27px; flex: none; box-sizing: border-box; display: flex; align-items: center; background: linear-gradient(#e7e7e7, #dcdcdc); border-bottom: 1px solid #a6a8aa; padding: 0 8px 2px 7px; white-space: nowrap; }
  .bm { display: flex; align-items: center; gap: 5px; height: 22px; }
  .apps { width: 16px; display: grid; grid-template-columns: repeat(3, 3px); gap: 2px; padding-left: 1px; box-sizing: border-box; }
  .apps b { height: 3px; }
  .other { margin-left: auto; display: flex; align-items: center; gap: 5px; height: 20px; border-left: 1px solid #c5cfd7; padding-left: 7px; letter-spacing: -.38px; }

  .viewport { height: 643px; flex: none; display: flex; overflow: hidden; }
  .page { position: relative; width: 1349px; background: #ffa500; padding-left: 9px; box-sizing: border-box; overflow: hidden; font: 18px/20px "Liberation Serif", serif; letter-spacing: -.15px; color: #151000; }
  .coords { margin-top: -22px; }
  .row { height: 48px; display: flex; align-items: center; white-space: nowrap; }
  label { padding-bottom: 2px; }
  .lat { width: 71px; } .lng { width: 80px; margin-left: 4px; } .zoomlab { width: 48px; } .sublab { width: 52px; margin-left: 5px; }
  input, button { width: 110px; height: 48px; box-sizing: border-box; margin: 0; border-radius: 0; background: #ff0; border: 2px solid #f00; border-color: #b20000 #f00 #f00 #b20000; }
  button { background: #00f; border-color: #f00 #b20000 #b20000 #f00; color: #000020; font: italic 14.300px "Liberation Sans", sans-serif; padding: 15px 0 0 14px; }
  .row.last { height: 56px; align-items: flex-end; }
  .last label { padding-bottom: 15px; } .last button { margin-bottom: 8px; }
  .status { margin: 17px 0 1px; line-height: 20px; }
  .map { width: 550px; height: 418px; overflow: hidden; letter-spacing: 0; }
  .map > svg { display: block; }
  .borders path { fill: none; stroke: #858b7e; stroke-width: .6; opacity: .75; }
  .dateline path { fill: none; stroke: #96566c; stroke-width: 1; stroke-dasharray: 6 2; opacity: .85; }
  .cont text { font: italic 400 11px Roboto, sans-serif; text-anchor: middle; fill: #1d1d1d; stroke: #f5f5eb; stroke-width: 2px; paint-order: stroke; }
  .ocean text { font: italic 10px Roboto, sans-serif; text-anchor: middle; fill: #49678a; stroke: #cfe1fb; stroke-width: 1.500px; paint-order: stroke; }
  .btn { font-family: Roboto, sans-serif; font-size: 12px; }
  .terms { font-size: 11px; }
  .google { font: 24px "Liberation Serif", serif; fill: #fff; stroke: #8190a5; stroke-width: .8px; paint-order: stroke; }
  .activate { position: absolute; left: 1055px; top: 566px; display: flex; flex-direction: column; color: #cc9e4c; font-family: "Open Sans", sans-serif; white-space: nowrap; }
  .activate strong { font-weight: 300; font-size: 20px; line-height: 24px; letter-spacing: .05px; }
  .activate span { font-size: 14px; line-height: 20px; letter-spacing: .14px; }
  .scroll { width: 17px; box-sizing: border-box; background: #f1f1f1; display: flex; flex-direction: column; align-items: center; padding: 7px 0 6px; }
  .thumb { width: 13px; height: 581px; box-sizing: border-box; margin: 33px 0 auto; background: #a8a8a8; border: 1px solid #898989; }

  .taskbar { position: relative; height: 40px; flex: none; display: flex; isolation: isolate; }
  .wall { position: absolute; inset: 0; z-index: -1; }
  .start { width: 50px; padding: 6px 0 0 12px; box-sizing: border-box; }
  .slot { width: 62px; padding: 1px 2px; box-sizing: border-box; flex: none; }
  .app { width: 58px; height: 38px; box-sizing: border-box; display: grid; place-items: center; }
  .app.open { border: 1px solid #a88389; background: #ad858933; }
  .app.focus { border: 1px solid #f2dfe0; background: #d2bbbd8f; }
  .app.stack { width: 54px; padding-right: 0; box-shadow: 4px 0 0 -1px #a25f68, 5px 0 0 -1px #be989e; }
  .tray { margin-left: 445px; display: flex; align-items: center; gap: 8px; padding-top: 2px; }
  .clock { margin-left: auto; width: 96px; display: flex; flex-direction: column; align-items: center; padding-top: 4px; color: #fff; line-height: 17px; letter-spacing: -.35px; }
</style>
